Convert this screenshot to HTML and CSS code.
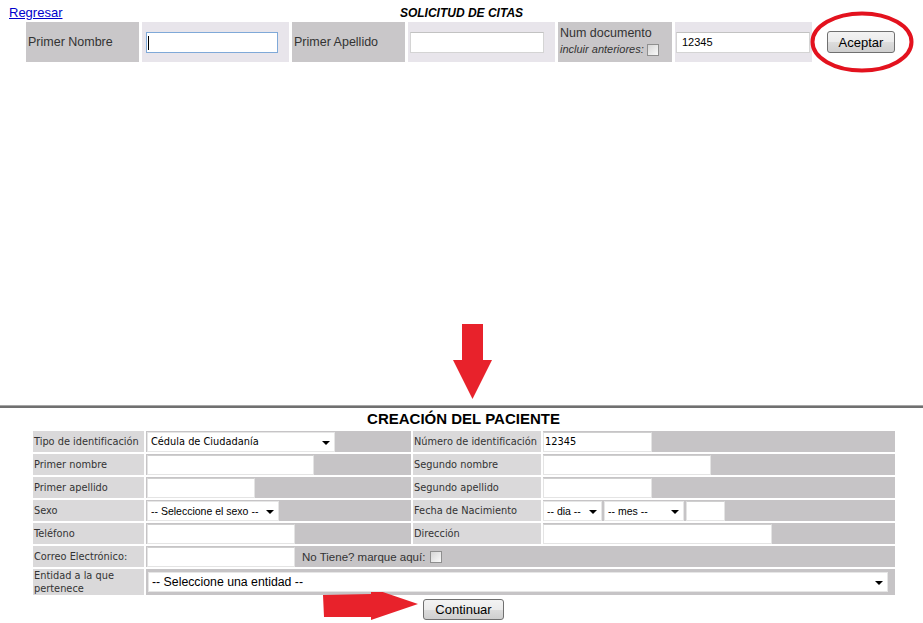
FILE: index.html
```html
<!DOCTYPE html>
<html lang="es">

<head>
    <meta charset="UTF-8">
    <title>Solicitud de citas</title>
    <link rel="stylesheet" href="styles.css">
</head>

<body>
    <div class="head">
        <a href="#" class="back">Regresar</a>
        <b class="title">SOLICITUD DE CITAS</b>
        <span></span>
    </div>

    <table class="search">
        <colgroup>
            <col class="c-lbl">
            <col class="c-fld">
            <col class="c-lbl">
            <col class="c-fld">
            <col class="c-doc">
            <col class="c-num">
            <col class="c-btn">
        </colgroup>
        <tr>
            <td class="lbl">Primer Nombre</td>
            <td class="fld p4"><span class="caret"><input type="text" class="txt focus w132"></span></td>
            <td class="lbl">Primer Apellido</td>
            <td class="fld p2"><input type="text" class="txt w134"></td>
            <td class="lbl doc">
                <div class="l1">Num documento</div>
                <div class="l2"><i>incluir anteriores:</i> <input type="checkbox" class="chk"></div>
            </td>
            <td class="fld p1"><input type="text" class="txt w134 num" value="12345"></td>
            <td class="act">
                <span class="mark">
                    <button class="btn aceptar">Aceptar</button>
                    <svg class="ring" width="106" height="64" viewBox="0 0 106 64">
                        <ellipse cx="53" cy="32" rx="49.5" ry="28.5" fill="none" stroke="#e3121e" stroke-width="4"/>
                    </svg>
                </span>
            </td>
        </tr>
    </table>

    <div class="between">
        <svg width="40" height="77" viewBox="0 0 40 77">
            <polygon points="9,1 30,1 30,37 39,37 19.5,76 0,37 9,37" fill="#e8222b"/>
        </svg>
    </div>
    <div class="rule"></div>

    <h2 class="subtitle">CREACIÓN DEL PACIENTE</h2>

    <table class="patient">
        <colgroup>
            <col class="p-lbl">
            <col class="p-fld">
            <col class="p-lbl2">
            <col class="p-fld2">
        </colgroup>
        <tr>
            <td class="lbl">Tipo de identificación</td>
            <td class="fld">
                <span class="sel w188">
                    <select class="verd"><option>Cédula de Ciudadanía</option></select>
                </span>
            </td>
            <td class="lbl">Número de identificación</td>
            <td class="fld"><input type="text" class="inp verd w109" value="12345"></td>
        </tr>
        <tr>
            <td class="lbl">Primer nombre</td>
            <td class="fld"><input type="text" class="inp w167"></td>
            <td class="lbl">Segundo nombre</td>
            <td class="fld"><input type="text" class="inp w168"></td>
        </tr>
        <tr>
            <td class="lbl">Primer apellido</td>
            <td class="fld"><input type="text" class="inp w108"></td>
            <td class="lbl">Segundo apellido</td>
            <td class="fld"><input type="text" class="inp w109"></td>
        </tr>
        <tr>
            <td class="lbl">Sexo</td>
            <td class="fld">
                <span class="sel w132">
                    <select class="sm"><option>-- Seleccione el sexo --</option></select>
                </span>
            </td>
            <td class="lbl">Fecha de Nacimiento</td>
            <td class="fld">
                <div class="fecha">
                    <span class="sel w59"><select class="sm"><option>-- dia --</option></select></span>
                    <span class="sel w80"><select class="sm"><option>-- mes --</option></select></span>
                    <input type="text" class="inp w39">
                </div>
            </td>
        </tr>
        <tr>
            <td class="lbl">Teléfono</td>
            <td class="fld"><input type="text" class="inp w148"></td>
            <td class="lbl">Dirección</td>
            <td class="fld"><input type="text" class="inp w229"></td>
        </tr>
        <tr>
            <td class="lbl">Correo Electrónico:</td>
            <td class="fld" colspan="3">
                <div class="correo">
                    <input type="text" class="inp w148">
                    <span class="notiene">No Tiene? marque aquí:</span>
                    <input type="checkbox" class="chk">
                </div>
            </td>
        </tr>
        <tr class="tall">
            <td class="lbl two">Entidad a la que pertenece</td>
            <td class="fld" colspan="3">
                <span class="sel w740 ent">
                    <select><option>-- Seleccione una entidad --</option></select>
                </span>
            </td>
        </tr>
    </table>

    <div class="foot">
        <svg class="go" width="96" height="33" viewBox="0 0 96 33">
            <polygon points="0,7 48,6 48,0 95,16 48,32 48,29 1,29" fill="#e8222b"/>
        </svg>
        <button class="btn continuar">Continuar</button>
    </div>
</body>

</html>
```

FILE: styles.css
```css
html,
body {
    margin: 0;
    padding: 0;
    background: #fff;
}

body {
    font-family: "Liberation Sans", Arial, sans-serif;
    color: #333;
}

.head {
    display: grid;
    grid-template-columns: 1fr auto 1fr;
    height: 22px;
    padding-top: 4px;
    box-sizing: border-box;
    line-height: 18px;
}

.back {
    padding-left: 9px;
    font-size: 13px;
    color: #0000cc;
    text-decoration: underline;
    justify-self: start;
}

.title {
    font-size: 12px;
    font-style: italic;
    font-weight: bold;
    color: #000;
}

/* busqueda */

.search {
    table-layout: fixed;
    width: 877px;
    margin-left: 23px;
    border-collapse: separate;
    border-spacing: 3px 0;
}

.c-lbl {
    width: 113px;
}

.c-fld {
    width: 147px;
}

.c-doc {
    width: 114px;
}

.c-num {
    width: 137px;
}

.c-btn {
    width: 82px;
}

.search td {
    box-sizing: border-box;
    height: 40px;
    padding: 0;
    font-size: 12.5px;
    vertical-align: middle;
}

.search .lbl {
    background: #c9c7c9;
    padding-left: 2px;
}

.search .fld {
    background: #e8e5eb;
}

.search .p4 {
    padding-left: 4px;
}

.search .p2 {
    padding-left: 2px;
}

.search .p1 {
    padding-left: 1px;
}

.search .doc {
    vertical-align: top;
    padding-top: 3px;
}

.doc .l1 {
    line-height: 16px;
}

.doc .l2 {
    line-height: 16px;
    height: 18px;
    font-size: 11px;
    white-space: nowrap;
}

.txt {
    display: block;
    box-sizing: border-box;
    height: 21px;
    border: 1px solid #d4d4d4;
    border-top-color: #c2c2c2;
    background: #fff;
    padding: 0 5px;
    font-family: "Liberation Sans", Arial, sans-serif;
    font-size: 11px;
    color: #000;
}

.txt.focus {
    border-color: #7fa9d8;
}

.caret {
    position: relative;
    display: block;
    width: 132px;
}

.caret::after {
    content: "";
    position: absolute;
    left: 2px;
    top: 4px;
    width: 1px;
    height: 14px;
    background: #000;
}

.chk {
    -webkit-appearance: none;
    appearance: none;
    width: 12px;
    height: 12px;
    margin: 0;
    border: 1px solid #8f8f8f;
    background: linear-gradient(135deg, #d6d6d6, #fafafa);
    vertical-align: middle;
}

.search .act {
    padding-left: 12px;
    background: #fff;
}

.mark {
    position: relative;
    display: inline-block;
}

.ring {
    position: absolute;
    left: -18px;
    top: -21px;
}

.btn {
    display: block;
    box-sizing: border-box;
    padding: 0;
    border: 1px solid #707070;
    border-radius: 3px;
    background: linear-gradient(#f3f3f3 0, #ebebeb 50%, #dddddd 50%, #cfcfcf 100%);
    font-family: "Liberation Sans", Arial, sans-serif;
    font-size: 13px;
    color: #000;
}

.aceptar {
    width: 68px;
    height: 22px;
}

/* separacion */

.between {
    padding: 261px 0 0 453px;
    height: 77px;
}

.between svg {
    display: block;
}

.rule {
    margin-top: 5px;
    border-top: 1px solid #a6a6a6;
    border-bottom: 2px solid #707070;
}

.subtitle {
    margin: 0;
    height: 21px;
    line-height: 21px;
    text-align: center;
    padding-left: 4px;
    font-size: 15px;
    font-weight: bold;
    color: #000;
}

/* paciente */

.patient {
    table-layout: fixed;
    width: 866px;
    margin-left: 31px;
    border-collapse: separate;
    border-spacing: 2px;
}

.p-lbl {
    width: 111px;
}

.p-fld {
    width: 265px;
}

.p-lbl2 {
    width: 128px;
}

.p-fld2 {
    width: 352px;
}

.patient td {
    height: 21px;
    padding: 0;
    vertical-align: middle;
}

.patient .lbl {
    background: #dad9da;
    padding-left: 1px;
    font-family: "DejaVu Sans", Verdana, sans-serif;
    font-size: 9.8px;
    white-space: nowrap;
}

.patient .lbl.two {
    white-space: normal;
    line-height: 13px;
}

.patient .tall td {
    height: 25px;
}

.patient .fld {
    background: #c6c4c6;
    padding-left: 1px;
}

.patient td.fld:last-child {
    padding-left: 0;
}

.patient td.fld[colspan] {
    padding-left: 1px;
}

.inp {
    display: block;
    box-sizing: border-box;
    height: 20px;
    border: 1px solid #e4e4e4;
    border-top-color: #cfcfcf;
    background: #fff;
    padding: 0 1px;
    font-family: "Liberation Sans", Arial, sans-serif;
    font-size: 11px;
    color: #000;
}

.verd {
    font-family: "DejaVu Sans", Verdana, sans-serif;
    font-size: 9.8px;
}

.sel {
    position: relative;
    display: block;
}

.sel::after {
    content: "";
    position: absolute;
    right: 5px;
    top: 9px;
    border-left: 4px solid transparent;
    border-right: 4px solid transparent;
    border-top: 4px solid #000;
}

.sel select {
    -webkit-appearance: none;
    appearance: none;
    display: block;
    box-sizing: border-box;
    width: 100%;
    height: 20px;
    margin: 0;
    padding: 0 0 0 3px;
    border: 1px solid #e6e6e6;
    border-radius: 0;
    background: #fff;
    color: #000;
}

.sel select.sm {
    font-family: "Liberation Sans", Arial, sans-serif;
    font-size: 10.5px;
}

.sel.ent select {
    font-family: "Liberation Sans", Arial, sans-serif;
    font-size: 12.3px;
}

.sel.ent {
    margin-left: 1px;
}

.fecha {
    display: flex;
    gap: 2px;
}

.correo {
    display: flex;
    align-items: center;
}

.notiene {
    margin-left: 7px;
    margin-right: 5px;
    font-size: 11.5px;
}

.w39 { width: 39px; }
.w59 { width: 59px; }
.w80 { width: 80px; }
.w108 { width: 108px; }
.w109 { width: 109px; }
.w132 { width: 132px; }
.w134 { width: 134px; }
.w148 { width: 148px; }
.w167 { width: 167px; }
.w168 { width: 168px; }
.w188 { width: 188px; }
.w229 { width: 229px; }
.w740 { width: 740px; }

.foot {
    display: flex;
    align-items: flex-start;
    padding-left: 323px;
}

.go {
    display: block;
    margin-top: -9px;
}

.continuar {
    width: 81px;
    height: 21px;
    margin: 2px 0 0 4px;
}
```
